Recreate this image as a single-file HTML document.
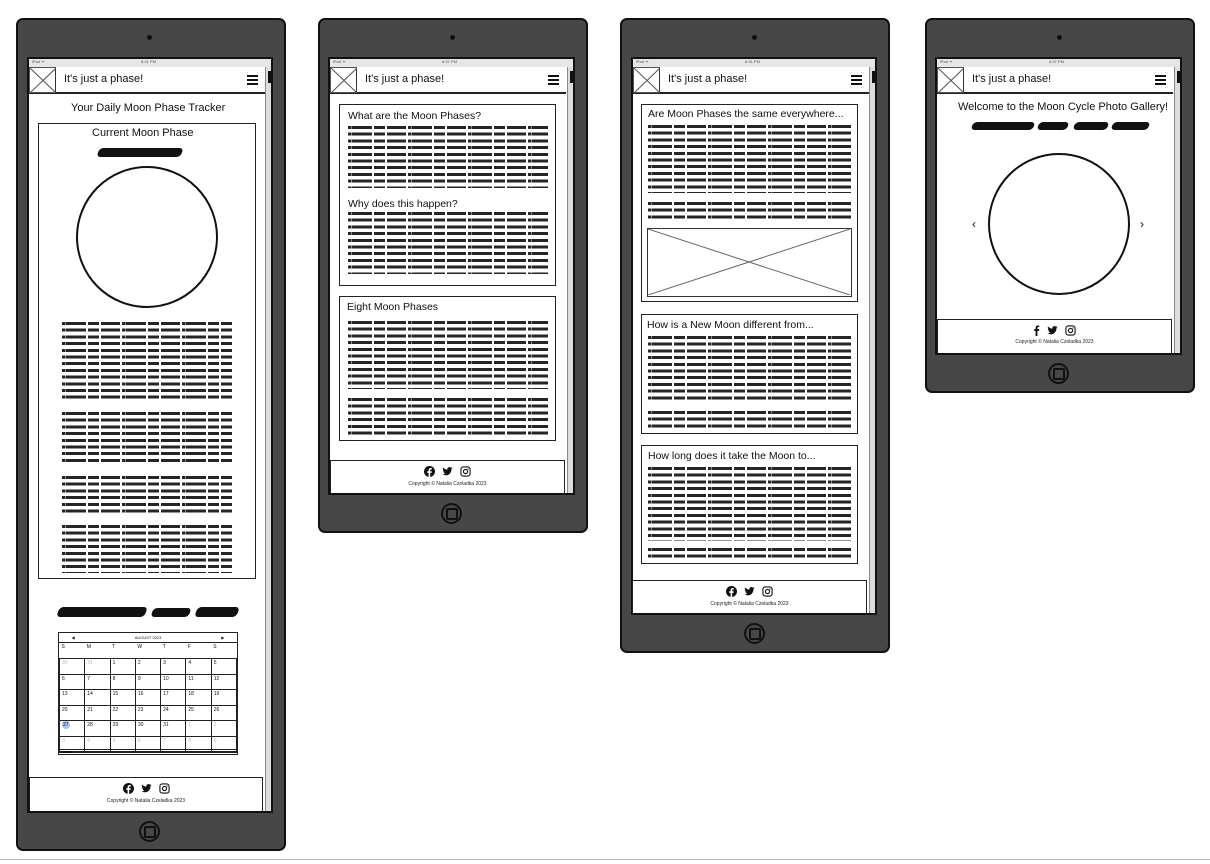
<!DOCTYPE html>
<html><head><meta charset="utf-8">
<style>
*{margin:0;padding:0;box-sizing:border-box}
body{width:1210px;height:864px;background:#fff;position:relative;overflow:hidden;font-family:"Liberation Sans",sans-serif;color:#111}
.a{position:absolute}
.dev{position:absolute;background:#474747;border:2px solid #111;border-radius:7px}
.cam{position:absolute;width:5px;height:5px;border-radius:50%;background:#111}
.scr{position:absolute;background:#fff;border:2px solid #111;overflow:hidden}
.sb{position:absolute;left:0;right:0;top:0;height:8px;background:#e6e6e6;font-size:4px;color:#555}
.hd{position:absolute;left:0;top:8px;height:27px;border-bottom:2px solid #222;background:#fff}
.logo{position:absolute;left:0;top:0;width:27px;height:26px;border:1px solid #555;border-right:1.5px solid #333}
.ttl{position:absolute;left:35px;top:6px;font-size:11px;color:#111}
.burger{position:absolute;top:8px;width:11px;height:10px;border-top:2px solid #111;border-bottom:2px solid #111}
.burger:after{content:"";position:absolute;left:0;right:0;top:2px;border-top:2px solid #111}
.vs{position:absolute;top:8px;bottom:0;width:7px;background:#ddd;border-left:1px solid #888}
.vs:after{content:"";position:absolute;left:2px;top:4px;width:3px;height:12px;background:#111}
.box{position:absolute;border:1.5px solid #222;background:#fff}
.tb{position:absolute;background:repeating-linear-gradient(to bottom,#000 0 3px,transparent 3px 6.7px);-webkit-mask-image:repeating-linear-gradient(to right,#000 0 3px,rgba(0,0,0,.55) 3px 4px,#000 4px 24px,transparent 24px 26px,#000 26px 37px,transparent 37px 39px,#000 39px 58px,transparent 58px 60px);opacity:.85}
.h2{position:absolute;font-size:10.5px;color:#111;white-space:nowrap}
.circ{position:absolute;border:2px solid #111;border-radius:50%}
.scrib{position:absolute;background:#111;border-radius:4px;transform:skewX(-20deg)}
.ft{position:absolute;border:1.5px solid #222;border-bottom:none;background:#fff;text-align:center}
.ico{display:flex;justify-content:center;align-items:center;gap:7px;margin-top:5px;height:11px}
.cp{font-size:5px;margin-top:4px;color:#222}
.home{position:absolute;width:21px;height:21px;border:2px solid #111;border-radius:50%;display:flex;align-items:center;justify-content:center}
.home:after{content:"";width:8px;height:8px;border:2px solid #111;border-radius:2px}
.cal{position:absolute;left:58px;top:632px;width:180px;border:1px solid #222;font-size:5px}
.cal table{border-collapse:collapse;width:100%}
.cal td{border:1px solid #222;height:15.5px;vertical-align:top;padding:1px 2px;width:14.28%}
.g{color:#bbb}
</style></head><body>

<!-- Device 1 -->
<div class="dev" style="left:16px;top:18px;width:270px;height:833px"></div>
<div class="cam" style="left:147px;top:35px"></div>
<div class="scr" style="left:27px;top:57px;width:246px;height:756px">
 <div class="sb"><span style="position:absolute;left:3px">iPad ᯤ</span><span style="position:absolute;left:112px">6:31 PM</span></div>
 <div class="hd" style="width:236px"><div class="logo"><svg width="26" height="25"><path d="M0 0L26 25M26 0L0 25" stroke="#555" stroke-width="1"/></svg></div><div class="ttl">It's just a phase!</div><div class="burger" style="left:218px"></div></div>
 <div class="vs" style="left:236px"></div>
</div>
<div class="h2" style="left:71px;top:102px;font-size:11px">Your Daily Moon Phase Tracker</div>
<div class="box" style="left:38px;top:123px;width:218px;height:456px"></div>
<div class="h2" style="left:92px;top:127px;font-size:11px">Current Moon Phase</div>
<div class="scrib" style="left:98px;top:148px;width:84px;height:9px"></div>
<div class="circ" style="left:76px;top:166px;width:142px;height:142px"></div>
<div class="tb" style="left:62px;top:322px;width:170px;height:80px"></div>
<div class="tb" style="left:62px;top:412px;width:170px;height:53px"></div>
<div class="tb" style="left:62px;top:476px;width:170px;height:40px"></div>
<div class="tb" style="left:62px;top:525px;width:170px;height:48px"></div>
<div class="scrib" style="left:58px;top:607px;width:88px;height:10px"></div>
<div class="scrib" style="left:152px;top:608px;width:38px;height:9px"></div>
<div class="scrib" style="left:196px;top:607px;width:42px;height:10px"></div>
<div class="cal">
 <div style="height:10px;border-bottom:1px solid #222;position:relative;text-align:center;font-size:4px;line-height:10px">◀<span style="margin:0 60px">AUGUST 2023</span>▶</div>
 <table>
 <tr><td style="height:9px;border:none">S</td><td style="border:none">M</td><td style="border:none">T</td><td style="border:none">W</td><td style="border:none">T</td><td style="border:none">F</td><td style="border:none">S</td></tr>
 <tr><td class="g">30</td><td class="g">31</td><td>1</td><td>2</td><td>3</td><td>4</td><td>5</td></tr>
 <tr><td>6</td><td>7</td><td>8</td><td>9</td><td>10</td><td>11</td><td>12</td></tr>
 <tr><td>13</td><td>14</td><td>15</td><td>16</td><td>17</td><td>18</td><td>19</td></tr>
 <tr><td>20</td><td>21</td><td>22</td><td>23</td><td>24</td><td>25</td><td>26</td></tr>
 <tr><td><span style="background:#a9c4ef;border-radius:50%;padding:1px">27</span></td><td>28</td><td>29</td><td>30</td><td>31</td><td class="g">1</td><td class="g">2</td></tr>
 <tr><td class="g">3</td><td class="g">4</td><td class="g">5</td><td class="g">6</td><td class="g">7</td><td class="g">8</td><td class="g">9</td></tr>
 </table>
</div>
<div class="a" style="left:58px;top:749px;width:180px;height:6px;border:1px solid #222"><div style="position:absolute;left:4px;top:1px;width:10px;height:2px;background:#111"></div></div>
<div class="ft" style="left:29px;top:777px;width:234px;height:34px">
 <div class="ico">
  <svg width="11" height="11" viewBox="0 0 24 24"><circle cx="12" cy="12" r="12" fill="#111"/><path d="M13.5 24v-9h3l.5-3.5h-3.5V9.3c0-1 .3-1.7 1.8-1.7H17V4.5c-.3 0-1.4-.1-2.6-.1-2.6 0-4.4 1.6-4.4 4.5v2.6H7V15h3v9z" fill="#fff"/></svg>
  <svg width="11" height="11" viewBox="0 0 24 24"><path d="M23 4.6c-.8.4-1.7.6-2.6.7.9-.6 1.6-1.4 2-2.5-.9.5-1.9.9-2.9 1.1A4.5 4.5 0 0 0 11.8 8 12.8 12.8 0 0 1 2.5 3.3a4.5 4.5 0 0 0 1.4 6 4.5 4.5 0 0 1-2-.6 4.5 4.5 0 0 0 3.6 4.5 4.5 4.5 0 0 1-2 .1 4.5 4.5 0 0 0 4.2 3.1A9 9 0 0 1 1 18.3 12.8 12.8 0 0 0 7.9 20.3c8.3 0 12.8-6.9 12.8-12.8v-.6c.9-.6 1.7-1.4 2.3-2.3z" fill="#111"/></svg>
  <svg width="11" height="11" viewBox="0 0 24 24"><rect x="2" y="2" width="20" height="20" rx="5" fill="none" stroke="#111" stroke-width="2.4"/><circle cx="12" cy="12" r="4.5" fill="none" stroke="#111" stroke-width="2.4"/><circle cx="17.5" cy="6.5" r="1.3" fill="#111"/></svg>
 </div><div class="cp">Copyright © Natalia Czeladka 2023</div></div>
<div class="home" style="left:139px;top:821px"></div>

<!-- Device 2 -->
<div class="dev" style="left:318px;top:18px;width:270px;height:515px"></div>
<div class="cam" style="left:450px;top:35px"></div>
<div class="scr" style="left:328px;top:57px;width:247px;height:438px">
 <div class="sb"><span style="position:absolute;left:3px">iPad ᯤ</span><span style="position:absolute;left:112px">6:37 PM</span></div>
 <div class="hd" style="width:236px"><div class="logo"><svg width="26" height="25"><path d="M0 0L26 25M26 0L0 25" stroke="#555" stroke-width="1"/></svg></div><div class="ttl">It's just a phase!</div><div class="burger" style="left:218px"></div></div>
 <div class="vs" style="left:237px"></div>
</div>
<div class="box" style="left:339px;top:104px;width:217px;height:182px"></div>
<div class="h2" style="left:348px;top:110px">What are the Moon Phases?</div>
<div class="tb" style="left:348px;top:126px;width:200px;height:62px"></div>
<div class="h2" style="left:348px;top:198px">Why does this happen?</div>
<div class="tb" style="left:348px;top:212px;width:200px;height:62px"></div>
<div class="box" style="left:339px;top:296px;width:217px;height:145px"></div>
<div class="h2" style="left:347px;top:301px">Eight Moon Phases</div>
<div class="tb" style="left:348px;top:321px;width:200px;height:68px"></div>
<div class="tb" style="left:348px;top:398px;width:200px;height:38px"></div>
<div class="ft" style="left:330px;top:460px;width:235px;height:33px">
 <div class="ico">
  <svg width="11" height="11" viewBox="0 0 24 24"><circle cx="12" cy="12" r="12" fill="#111"/><path d="M13.5 24v-9h3l.5-3.5h-3.5V9.3c0-1 .3-1.7 1.8-1.7H17V4.5c-.3 0-1.4-.1-2.6-.1-2.6 0-4.4 1.6-4.4 4.5v2.6H7V15h3v9z" fill="#fff"/></svg>
  <svg width="11" height="11" viewBox="0 0 24 24"><path d="M23 4.6c-.8.4-1.7.6-2.6.7.9-.6 1.6-1.4 2-2.5-.9.5-1.9.9-2.9 1.1A4.5 4.5 0 0 0 11.8 8 12.8 12.8 0 0 1 2.5 3.3a4.5 4.5 0 0 0 1.4 6 4.5 4.5 0 0 1-2-.6 4.5 4.5 0 0 0 3.6 4.5 4.5 4.5 0 0 1-2 .1 4.5 4.5 0 0 0 4.2 3.1A9 9 0 0 1 1 18.3 12.8 12.8 0 0 0 7.9 20.3c8.3 0 12.8-6.9 12.8-12.8v-.6c.9-.6 1.7-1.4 2.3-2.3z" fill="#111"/></svg>
  <svg width="11" height="11" viewBox="0 0 24 24"><rect x="2" y="2" width="20" height="20" rx="5" fill="none" stroke="#111" stroke-width="2.4"/><circle cx="12" cy="12" r="4.5" fill="none" stroke="#111" stroke-width="2.4"/><circle cx="17.5" cy="6.5" r="1.3" fill="#111"/></svg>
 </div><div class="cp">Copyright © Natalia Czeladka 2023</div></div>
<div class="home" style="left:441px;top:503px"></div>

<!-- Device 3 -->
<div class="dev" style="left:620px;top:18px;width:270px;height:635px"></div>
<div class="cam" style="left:752px;top:35px"></div>
<div class="scr" style="left:631px;top:57px;width:246px;height:558px">
 <div class="sb"><span style="position:absolute;left:3px">iPad ᯤ</span><span style="position:absolute;left:112px">6:31 PM</span></div>
 <div class="hd" style="width:236px"><div class="logo"><svg width="26" height="25"><path d="M0 0L26 25M26 0L0 25" stroke="#555" stroke-width="1"/></svg></div><div class="ttl">It's just a phase!</div><div class="burger" style="left:218px"></div></div>
 <div class="vs" style="left:236px"></div>
</div>
<div class="box" style="left:641px;top:104px;width:217px;height:198px"></div>
<div class="h2" style="left:648px;top:108px">Are Moon Phases the same everywhere...</div>
<div class="tb" style="left:648px;top:125px;width:203px;height:68px"></div>
<div class="tb" style="left:648px;top:202px;width:203px;height:20px"></div>
<div class="a" style="left:647px;top:228px;width:205px;height:69px;border:1.5px solid #333"><svg width="202" height="66" style="position:absolute;left:0;top:0"><path d="M0 0L202 66M202 0L0 66" stroke="#666" stroke-width="1"/></svg></div>
<div class="box" style="left:641px;top:314px;width:217px;height:120px"></div>
<div class="h2" style="left:647px;top:319px">How is a New Moon different from...</div>
<div class="tb" style="left:648px;top:336px;width:203px;height:65px"></div>
<div class="tb" style="left:648px;top:411px;width:203px;height:20px"></div>
<div class="box" style="left:641px;top:445px;width:217px;height:119px"></div>
<div class="h2" style="left:648px;top:450px">How long does it take the Moon to...</div>
<div class="tb" style="left:648px;top:467px;width:203px;height:74px"></div>
<div class="tb" style="left:648px;top:548px;width:203px;height:11px"></div>
<div class="ft" style="left:632px;top:580px;width:235px;height:33px">
 <div class="ico">
  <svg width="11" height="11" viewBox="0 0 24 24"><circle cx="12" cy="12" r="12" fill="#111"/><path d="M13.5 24v-9h3l.5-3.5h-3.5V9.3c0-1 .3-1.7 1.8-1.7H17V4.5c-.3 0-1.4-.1-2.6-.1-2.6 0-4.4 1.6-4.4 4.5v2.6H7V15h3v9z" fill="#fff"/></svg>
  <svg width="11" height="11" viewBox="0 0 24 24"><path d="M23 4.6c-.8.4-1.7.6-2.6.7.9-.6 1.6-1.4 2-2.5-.9.5-1.9.9-2.9 1.1A4.5 4.5 0 0 0 11.8 8 12.8 12.8 0 0 1 2.5 3.3a4.5 4.5 0 0 0 1.4 6 4.5 4.5 0 0 1-2-.6 4.5 4.5 0 0 0 3.6 4.5 4.5 4.5 0 0 1-2 .1 4.5 4.5 0 0 0 4.2 3.1A9 9 0 0 1 1 18.3 12.8 12.8 0 0 0 7.9 20.3c8.3 0 12.8-6.9 12.8-12.8v-.6c.9-.6 1.7-1.4 2.3-2.3z" fill="#111"/></svg>
  <svg width="11" height="11" viewBox="0 0 24 24"><rect x="2" y="2" width="20" height="20" rx="5" fill="none" stroke="#111" stroke-width="2.4"/><circle cx="12" cy="12" r="4.5" fill="none" stroke="#111" stroke-width="2.4"/><circle cx="17.5" cy="6.5" r="1.3" fill="#111"/></svg>
 </div><div class="cp">Copyright © Natalia Czeladka 2023</div></div>
<div class="home" style="left:744px;top:623px"></div>

<!-- Device 4 -->
<div class="dev" style="left:925px;top:18px;width:270px;height:375px"></div>
<div class="cam" style="left:1057px;top:35px"></div>
<div class="scr" style="left:935px;top:57px;width:247px;height:298px">
 <div class="sb"><span style="position:absolute;left:3px">iPad ᯤ</span><span style="position:absolute;left:112px">6:37 PM</span></div>
 <div class="hd" style="width:236px"><div class="logo"><svg width="26" height="25"><path d="M0 0L26 25M26 0L0 25" stroke="#555" stroke-width="1"/></svg></div><div class="ttl">It's just a phase!</div><div class="burger" style="left:218px"></div></div>
 <div class="vs" style="left:237px"></div>
</div>
<div class="h2" style="left:958px;top:101px;font-size:11px">Welcome to the Moon Cycle Photo Gallery!</div>
<div class="scrib" style="left:972px;top:122px;width:62px;height:8px"></div>
<div class="scrib" style="left:1038px;top:122px;width:30px;height:8px"></div>
<div class="scrib" style="left:1074px;top:122px;width:34px;height:8px"></div>
<div class="scrib" style="left:1112px;top:122px;width:37px;height:8px"></div>
<div class="circ" style="left:988px;top:153px;width:142px;height:142px"></div>
<div class="h2" style="left:972px;top:217px;font-size:12px">‹</div>
<div class="h2" style="left:1140px;top:217px;font-size:12px">›</div>
<div class="ft" style="left:937px;top:319px;width:235px;height:34px">
 <div class="ico">
  <svg width="7" height="11" viewBox="0 0 12 24"><path d="M8 24V13h3.5l.5-4H8V6.5c0-1.1.3-1.9 1.9-1.9H12V1.1C11.6 1 10.4 1 9 1 6 1 4 2.8 4 6.1V9H1v4h3v11z" fill="#111"/></svg>
  <svg width="11" height="11" viewBox="0 0 24 24"><path d="M23 4.6c-.8.4-1.7.6-2.6.7.9-.6 1.6-1.4 2-2.5-.9.5-1.9.9-2.9 1.1A4.5 4.5 0 0 0 11.8 8 12.8 12.8 0 0 1 2.5 3.3a4.5 4.5 0 0 0 1.4 6 4.5 4.5 0 0 1-2-.6 4.5 4.5 0 0 0 3.6 4.5 4.5 4.5 0 0 1-2 .1 4.5 4.5 0 0 0 4.2 3.1A9 9 0 0 1 1 18.3 12.8 12.8 0 0 0 7.9 20.3c8.3 0 12.8-6.9 12.8-12.8v-.6c.9-.6 1.7-1.4 2.3-2.3z" fill="#111"/></svg>
  <svg width="11" height="11" viewBox="0 0 24 24"><rect x="2" y="2" width="20" height="20" rx="5" fill="none" stroke="#111" stroke-width="2.4"/><circle cx="12" cy="12" r="4.5" fill="none" stroke="#111" stroke-width="2.4"/><circle cx="17.5" cy="6.5" r="1.3" fill="#111"/></svg>
 </div><div class="cp" style="margin-top:3px">Copyright © Natalia Czeladka 2023</div></div>
<div class="home" style="left:1048px;top:363px"></div>

<div class="a" style="left:0;top:859px;width:1210px;height:1px;background:#bbb"></div>
</body></html>
